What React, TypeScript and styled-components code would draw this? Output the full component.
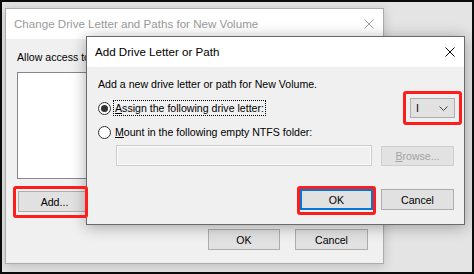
import React from 'react';
import styled, { createGlobalStyle, css } from 'styled-components';

const GlobalStyle = createGlobalStyle`
  html, body {
    margin: 0;
    padding: 0;
    background: #e4e4e4;
  }
`;

const Desktop = styled.div`
  position: relative;
  width: 474px;
  height: 274px;
  box-sizing: border-box;
  border: 2px solid #0b0b0b;
  background: #e4e4e4;
  overflow: hidden;
  font-family: 'Liberation Sans', Arial, sans-serif;
  font-size: 10.6px;
  line-height: 16px;
  color: #000;
`;

const Window = styled.div<{ $active?: boolean; $x: number; $y: number; $w: number; $h: number }>`
  position: absolute;
  left: ${({ $x }) => $x}px;
  top: ${({ $y }) => $y}px;
  width: ${({ $w }) => $w}px;
  height: ${({ $h }) => $h}px;
  box-sizing: border-box;
  display: flex;
  flex-direction: column;
  background: #f0f0f0;
  border: 1px solid ${({ $active }) => ($active ? '#6a6a6a' : '#acacac')};
  box-shadow: ${({ $active }) =>
    $active ? '0 2px 14px rgba(0, 0, 0, 0.32)' : '0 2px 10px rgba(0, 0, 0, 0.18)'};
`;

const TitleBar = styled.div<{ $active?: boolean }>`
  display: flex;
  align-items: center;
  justify-content: space-between;
  height: 30px;
  flex: none;
  padding: 0 9px 0 8px;
  background: #fff;
  font-size: 11.6px;
  color: ${({ $active }) => ($active ? '#000' : '#9a9a9a')};
  white-space: nowrap;
`;

const Body = styled.div<{ $pad: string }>`
  flex: 1;
  display: flex;
  flex-direction: column;
  padding: ${({ $pad }) => $pad};
  min-height: 0;
`;

const Line = styled.div`
  white-space: nowrap;
  height: 16px;
`;

const ListBox = styled.div`
  height: 107px;
  margin-top: 7px;
  box-sizing: border-box;
  border: 1px solid #828790;
  background: #fff;
`;

const Button = styled.button<{ $default?: boolean; $w?: number; $h?: number }>`
  width: ${({ $w = 73 }) => $w}px;
  height: ${({ $h = 21 }) => $h}px;
  flex: none;
  box-sizing: border-box;
  padding: 0;
  margin: 0;
  border: 1px solid #adadad;
  background: #e1e1e1;
  font: inherit;
  color: #000;
  ${({ $default }) =>
    $default &&
    css`
      border: 2px solid #0078d7;
    `}
  &:disabled {
    color: #a3a3a3;
    background: #e2e2e2;
    border-color: #cfcfcf;
  }
`;

const ButtonRow = styled.div<{ $gap: number }>`
  display: flex;
  justify-content: flex-end;
  gap: ${({ $gap }) => $gap}px;
  margin-top: auto;
`;

const Row = styled.div<{ $mt: number; $indent?: number; $spread?: boolean }>`
  display: flex;
  align-items: center;
  justify-content: ${({ $spread }) => ($spread ? 'space-between' : 'flex-start')};
  margin-top: ${({ $mt }) => $mt}px;
  padding-left: ${({ $indent = 0 }) => $indent}px;
  white-space: nowrap;
`;

const Radio = styled.span<{ $checked?: boolean }>`
  display: flex;
  align-items: center;
  justify-content: center;
  width: 13px;
  height: 13px;
  flex: none;
  box-sizing: border-box;
  margin-right: 2px;
  border: 1px solid #333;
  border-radius: 50%;
  background: #fff;
  &::after {
    content: '';
    display: ${({ $checked }) => ($checked ? 'block' : 'none')};
    width: 7px;
    height: 7px;
    border-radius: 50%;
    background: #333;
  }
`;

const Label = styled.span<{ $focused?: boolean }>`
  padding: 0 1px;
  line-height: 14px;
  border: 1px dotted ${({ $focused }) => ($focused ? '#000' : 'transparent')};
`;

const Key = styled.span`
  text-decoration: underline;
`;

const Combo = styled.div`
  display: flex;
  align-items: center;
  justify-content: space-between;
  width: 45px;
  height: 20px;
  margin-left: auto;
  margin-right: -1px;
  box-sizing: border-box;
  padding: 0 6px 0 5px;
  border: 1px solid #adadad;
  background: #e1e1e1;
`;

const TextBox = styled.div`
  width: 256px;
  height: 21px;
  box-sizing: border-box;
  border: 1px solid #cccccc;
  box-shadow: inset 0 0 0 1px #fbfbfb;
  background: #f0f0f0;
`;

const Highlight = styled.div<{ $x: number; $y: number; $w: number; $h: number }>`
  position: absolute;
  left: ${({ $x }) => $x}px;
  top: ${({ $y }) => $y}px;
  width: ${({ $w }) => $w}px;
  height: ${({ $h }) => $h}px;
  box-sizing: border-box;
  border: 3px solid #fe1d1d;
  border-radius: 3px;
  pointer-events: none;
`;

const CloseIcon = ({ color }: { color: string }) => (
  <svg width="10" height="10" viewBox="0 0 10 10">
    <path d="M0.5 0.5 L9.5 9.5 M9.5 0.5 L0.5 9.5" stroke={color} strokeWidth="1" fill="none" />
  </svg>
);

const Chevron = () => (
  <svg width="9" height="5" viewBox="0 0 9 5">
    <path d="M0.5 0.5 L4.5 4.5 L8.5 0.5" stroke="#404040" strokeWidth="1" fill="none" />
  </svg>
);

export default function App() {
  return (
    <>
      <GlobalStyle />
      <Desktop>
        <Window $x={3} $y={6} $w={379} $h={256}>
          <TitleBar>
            <span>Change Drive Letter and Paths for New Volume</span>
            <CloseIcon color="#a0a0a0" />
          </TitleBar>
          <Body $pad="10px 15px 13px 11px">
            <Line>Allow access to this volume by using the following drive letter and paths:</Line>
            <ListBox />
            <Row $mt={12} $indent={1}>
              <Button>Add...</Button>
            </Row>
            <ButtonRow $gap={15}>
              <Button $w={72}>OK</Button>
              <Button>Cancel</Button>
            </ButtonRow>
          </Body>
        </Window>

        <Window $active $x={84} $y={34} $w={379} $h={189}>
          <TitleBar $active>
            <span>Add Drive Letter or Path</span>
            <CloseIcon color="#000" />
          </TitleBar>
          <Body $pad="9px 10px 14px 11px">
            <Line>Add a new drive letter or path for New Volume.</Line>
            <Row $mt={6}>
              <Radio $checked />
              <Label $focused>
                <Key>A</Key>ssign the following drive letter:
              </Label>
              <Combo>
                <span>I</span>
                <Chevron />
              </Combo>
            </Row>
            <Row $mt={6}>
              <Radio />
              <Label>
                <Key>M</Key>ount in the following empty NTFS folder:
              </Label>
            </Row>
            <Row $mt={5} $indent={18} $spread>
              <TextBox />
              <Button disabled $h={20}>
                <Key>B</Key>rowse...
              </Button>
            </Row>
            <ButtonRow $gap={8}>
              <Button $default>OK</Button>
              <Button>Cancel</Button>
            </ButtonRow>
          </Body>
        </Window>

        <Highlight $x={401} $y={89} $w={59} $h={34} />
        <Highlight $x={11} $y={184} $w={75} $h={32} />
        <Highlight $x={295} $y={184} $w={79} $h={29} />
      </Desktop>
    </>
  );
}
